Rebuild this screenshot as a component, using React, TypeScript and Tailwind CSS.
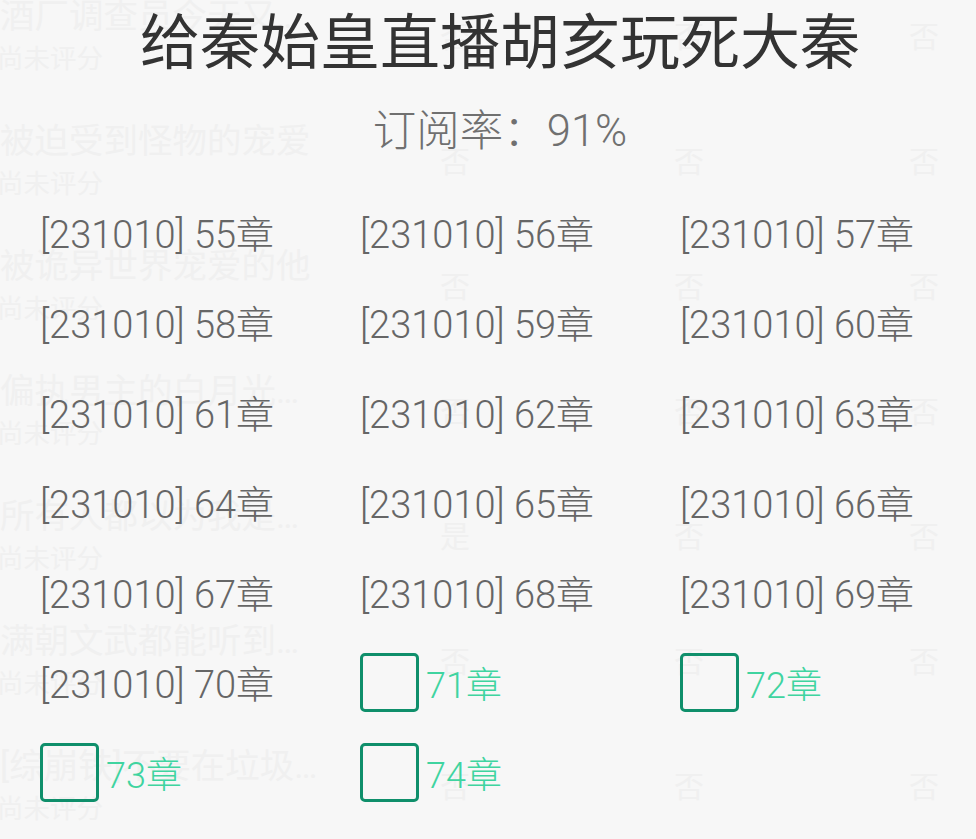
type GhostRow = {
  title: string;
  marks: [string, string, string];
};

type Chapter = {
  label: string;
  locked: boolean;
};

const GHOST_ROWS: GhostRow[] = [
  { title: "酒厂调查员今天又…", marks: ["否", "否", "否"] },
  { title: "被迫受到怪物的宠爱", marks: ["否", "否", "否"] },
  { title: "被诡异世界宠爱的他", marks: ["否", "否", "否"] },
  { title: "偏执男主的白月光…", marks: ["否", "否", "否"] },
  { title: "所有人都以为我是…", marks: ["是", "否", "否"] },
  { title: "满朝文武都能听到…", marks: ["否", "否", "否"] },
  { title: "[综崩铁]不要在垃圾…", marks: ["否", "否", "否"] },
];

const CHAPTERS: Chapter[] = [
  ...Array.from({ length: 16 }, (_, i) => ({ label: `[231010] ${55 + i}章`, locked: false })),
  { label: "71章", locked: true },
  { label: "72章", locked: true },
  { label: "73章", locked: true },
  { label: "74章", locked: true },
];

const FONT = "font-['Roboto','Noto_Sans_CJK_SC',sans-serif]";

function GhostList() {
  return (
    <div className="-mt-[26px] flex flex-col">
      {GHOST_ROWS.map((row) => (
        <div key={row.title} className="grid h-[125px] grid-cols-[340px_230px_238px_232px] items-center">
          <div className="flex flex-col gap-[5px]">
            <p className="whitespace-nowrap text-[34.5px] leading-[40px] text-[#f0f0f0]">{row.title}</p>
            <p className="-ml-[3px] whitespace-nowrap text-[26.5px] leading-[36px] text-[#f0f0f0]">尚未评分</p>
          </div>
          {row.marks.map((mark, i) => (
            <p key={`${row.title}-${i}`} className="text-center text-[30px] leading-[36px] text-[#f0f0f0]">
              {mark}
            </p>
          ))}
        </div>
      ))}
    </div>
  );
}

function ChapterCell({ chapter }: { chapter: Chapter }) {
  if (chapter.locked) {
    return (
      <div className="flex h-[90px] items-center">
        <span className="-mt-[6px] h-[59px] w-[59px] shrink-0 rounded-[5px] border-[3px] border-[#0f8f6b]" />
        <span className="ml-[7px] pt-[2px] text-[36px] leading-none font-light text-[#3fd4a0]">{chapter.label}</span>
      </div>
    );
  }

  return (
    <div className="flex h-[90px] items-center">
      <span className="whitespace-nowrap text-[38px] leading-none font-light text-[#666666]">{chapter.label}</span>
    </div>
  );
}

export default function App() {
  return (
    <div className={`relative h-[839px] w-[976px] overflow-hidden bg-[#f7f7f7] ${FONT}`}>
      <GhostList />

      <div className="absolute inset-0 flex flex-col">
        <div className="pl-[24px]">
          <h1 className="h-[88px] text-center text-[60px] leading-[88px] font-normal text-[#333333]">
            给秦始皇直播胡亥玩死大秦
          </h1>
          <p className="h-[88px] text-center text-[43.5px] leading-[88px] font-light text-[#707070]">订阅率：91%</p>
        </div>

        <div className="mt-[14px] grid grid-cols-[320px_320px_320px] pl-[40px]">
          {CHAPTERS.map((chapter) => (
            <ChapterCell key={chapter.label} chapter={chapter} />
          ))}
        </div>
      </div>
    </div>
  );
}
